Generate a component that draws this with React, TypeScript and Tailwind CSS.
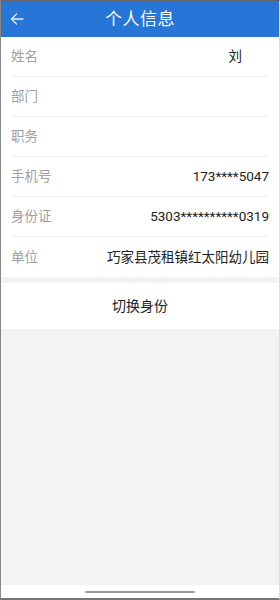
import React from "react";

const rows: [string, string][] = [
  ["姓名", "刘"],
  ["部门", ""],
  ["职务", ""],
  ["手机号", "173****5047"],
  ["身份证", "5303**********0319"],
  ["单位", "巧家县茂租镇红太阳幼儿园"],
];

export default function App() {
  return (
    <div
      className="w-[280px] h-[600px] flex flex-col bg-[#f3f3f3] border-t border-l border-r border-b-2 border-t-[#666] border-l-[#888] border-r-[#ddd] border-b-[#777] overflow-hidden"
      style={{ fontFamily: 'Roboto, "Noto Sans CJK SC", "Noto Sans", sans-serif' }}
    >
      <div className="h-[36px] shrink-0 bg-[#2675d7] relative flex items-center justify-center">
        <svg
          className="absolute left-[9px] top-[11px]"
          width="14"
          height="14"
          viewBox="0 0 14 14"
          fill="none"
          stroke="#dfeafc"
          strokeWidth="1.3"
          strokeLinecap="round"
          strokeLinejoin="round"
        >
          <path d="M13 7H1.5M6.5 2L1.5 7l5 5" />
        </svg>
        <span className="text-white text-[17px] leading-none tracking-[0.5px]">个人信息</span>
      </div>
      <div className="bg-white">
        {rows.map(([k, v], i) => (
          <div key={k} className="px-[10px]">
            <div
              className={`h-[40px] flex items-center justify-between ${
                i < rows.length - 1 ? "border-b border-[#f0f0f0]" : ""
              }`}
            >
              <span className="text-[13.5px] text-[#a0a0a0]">{k}</span>
              <span className={`text-[13.5px] text-[#222] ${i === 0 ? "pr-[27px]" : ""}`}>{v}</span>
            </div>
          </div>
        ))}
      </div>
      <div className="h-[6px] shrink-0" />
      <div className="h-[46px] shrink-0 bg-white flex items-center justify-center">
        <span className="text-[14px] text-[#222]">切换身份</span>
      </div>
      <div className="flex-1" />
      <div className="h-[13px] shrink-0 bg-white flex items-center justify-center">
        <div className="w-[110px] h-[2px] bg-[#9a9a9a] rounded-full" />
      </div>
    </div>
  );
}
